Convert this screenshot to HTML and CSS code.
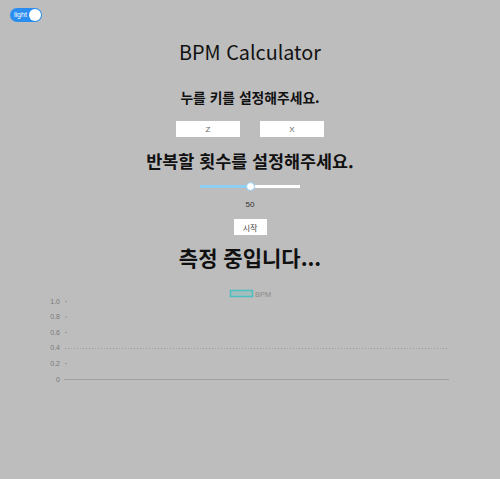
FILE: index.html
```html
<!DOCTYPE html>
<html lang="ko">
<head>
<meta charset="utf-8">
<title>BPM Calculator</title>
<link rel="stylesheet" href="styles.css">
</head>
<body>
<div class="topbar">
  <div class="toggle"><span class="toggle-label">light</span><span class="knob"></span></div>
</div>
<main class="app">
  <h1 class="title">BPM Calculator</h1>
  <h2 class="sub">누를 키를 설정해주세요.</h2>
  <div class="keys">
    <input class="key" type="text" value="z">
    <input class="key" type="text" value="x">
  </div>
  <h2 class="sub big">반복할 횟수를 설정해주세요.</h2>
  <div class="slider"><div class="fill"></div><div class="thumb"></div></div>
  <div class="count">50</div>
  <button class="start">시작</button>
  <h2 class="status">측정 중입니다...</h2>
  <div class="chart">
    <svg width="500" height="100" viewBox="0 0 500 100">
      <rect x="230.5" y="3.5" width="22" height="6" fill="rgba(75,192,192,0.2)" stroke="#4bc0c0" stroke-width="1.5"/>
      <text x="255" y="9.5" class="legend">BPM</text>
      <g class="ylab">
        <text x="60" y="16.5" text-anchor="end">1.0</text>
        <text x="60" y="32" text-anchor="end">0.8</text>
        <text x="60" y="47.5" text-anchor="end">0.6</text>
        <text x="60" y="63.3" text-anchor="end">0.4</text>
        <text x="60" y="78.9" text-anchor="end">0.2</text>
        <text x="60" y="94.5" text-anchor="end">0</text>
      </g>
      <g stroke="#9a9a9a" stroke-width="1">
        <line x1="65" y1="14.5" x2="67" y2="14.5"/>
        <line x1="65" y1="30" x2="67" y2="30"/>
        <line x1="65" y1="45.5" x2="67" y2="45.5"/>
        <line x1="65" y1="76.5" x2="67" y2="76.5"/>
      </g>
      <line x1="65" y1="61.5" x2="449" y2="61.5" stroke="#9c9c9c" stroke-width="1" stroke-dasharray="1,2"/>
      <line x1="64" y1="92.5" x2="449" y2="92.5" stroke="#a0a0a0" stroke-width="1"/>
    </svg>
  </div>
</main>
</body>
</html>
```
FILE: styles.css
```css
html, body {
  margin: 0;
  padding: 0;
}
body {
  background: #bdbdbd;
  width: 500px;
  height: 479px;
  overflow: hidden;
  font-family: "Noto Sans CJK KR", "Noto Sans", sans-serif;
  color: #111;
}
.topbar {
  padding: 8px 0 0 10px;
  height: 14px;
}
.toggle {
  width: 32px;
  height: 14px;
  border-radius: 7px;
  background: #2a8ef0;
  display: flex;
  align-items: center;
  justify-content: space-between;
  padding: 0 1px 0 4px;
  box-sizing: border-box;
}
.toggle-label {
  color: #fff;
  font-size: 7px;
  line-height: 14px;
  font-family: "Liberation Sans", sans-serif;
}
.knob {
  width: 12px;
  height: 12px;
  border-radius: 50%;
  background: #fff;
}
.app {
  display: flex;
  flex-direction: column;
  align-items: center;
}
.title {
  margin: 15px 0 0;
  font-size: 19.8px;
  font-weight: 400;
  line-height: 30px;
}
.sub {
  margin: 21px 0 0;
  font-size: 13.8px;
  font-weight: 700;
  line-height: 18px;
}
.keys {
  display: flex;
  gap: 20px;
  margin-top: 15px;
}
.key {
  width: 64px;
  height: 16px;
  box-sizing: border-box;
  border: none;
  background: #fff;
  text-align: center;
  font-size: 8px;
  color: #666;
  padding: 0;
  font-family: "Liberation Sans", sans-serif;
  text-transform: uppercase;
}
.sub.big {
  margin-top: 12px;
  font-size: 17.4px;
  line-height: 24px;
}
.slider {
  position: relative;
  width: 100px;
  height: 3px;
  margin-top: 12px;
  background: #fff;
}
.fill {
  width: 50px;
  height: 3px;
  background: #8fcdf3;
}
.thumb {
  position: absolute;
  left: 46px;
  top: -3px;
  width: 7px;
  height: 7px;
  border-radius: 50%;
  background: #fff;
  border: 1px solid #8fcdf3;
}
.count {
  margin-top: 12px;
  font-size: 8px;
  line-height: 10px;
  color: #333;
  font-family: "Liberation Sans", sans-serif;
}
.start {
  margin-top: 9px;
  width: 33px;
  height: 16px;
  border: none;
  background: #fff;
  font-size: 8px;
  color: #444;
  padding: 0;
  font-family: "Noto Sans CJK KR", sans-serif;
}
.status {
  margin: 7px 0 0;
  font-size: 21px;
  font-weight: 700;
  line-height: 30px;
}
.chart {
  margin-top: 15px;
  width: 500px;
  height: 100px;
}
.chart svg {
  display: block;
}
.legend {
  font-size: 7.5px;
  fill: #8a8a8a;
  font-family: "Liberation Sans", sans-serif;
}
.ylab text {
  font-size: 7px;
  fill: #7a7a7a;
  font-family: "Liberation Sans", sans-serif;
}
```
